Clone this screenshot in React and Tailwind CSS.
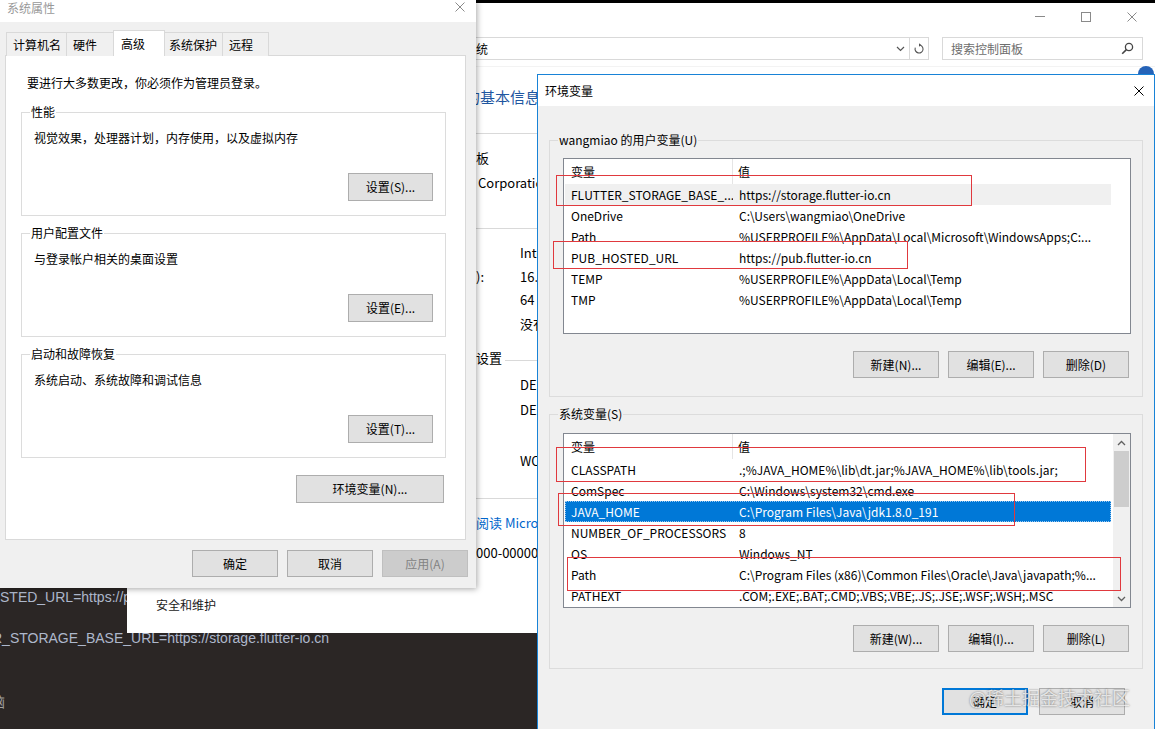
import React from 'react'

const ui = "font-['Noto_Sans_CJK_SC','Noto_Sans',sans-serif]"

const userVars = [
  ['FLUTTER_STORAGE_BASE_...', 'https://storage.flutter-io.cn', 'hover'],
  ['OneDrive', 'C:\\Users\\wangmiao\\OneDrive'],
  ['Path', '%USERPROFILE%\\AppData\\Local\\Microsoft\\WindowsApps;C:...'],
  ['PUB_HOSTED_URL', 'https://pub.flutter-io.cn'],
  ['TEMP', '%USERPROFILE%\\AppData\\Local\\Temp'],
  ['TMP', '%USERPROFILE%\\AppData\\Local\\Temp'],
]

const sysVars = [
  ['CLASSPATH', '.;%JAVA_HOME%\\lib\\dt.jar;%JAVA_HOME%\\lib\\tools.jar;'],
  ['ComSpec', 'C:\\Windows\\system32\\cmd.exe'],
  ['JAVA_HOME', 'C:\\Program Files\\Java\\jdk1.8.0_191', 'selected'],
  ['NUMBER_OF_PROCESSORS', '8'],
  ['OS', 'Windows_NT'],
  ['Path', 'C:\\Program Files (x86)\\Common Files\\Oracle\\Java\\javapath;%...'],
  ['PATHEXT', '.COM;.EXE;.BAT;.CMD;.VBS;.VBE;.JS;.JSE;.WSF;.WSH;.MSC'],
]

// annotation rectangles drawn over the screenshot
const marks = [
  'left-[556px] top-[175px] w-[416px] h-[31px]',
  'left-[553px] top-[241px] w-[355px] h-[28px]',
  'left-[556px] top-[447px] w-[530px] h-[35px]',
  'left-[558px] top-[493px] w-[457px] h-[33px]',
  'left-[567px] top-[557px] w-[554px] h-[34px]',
]

function XIcon({ className = '' }) {
  return (
    <svg width="10" height="10" viewBox="0 0 10 10" className={className}>
      <path d="M0.5 0.5L9.5 9.5M9.5 0.5L0.5 9.5" stroke="currentColor" strokeWidth="1" fill="none" />
    </svg>
  )
}

function Chevron({ up }) {
  return (
    <svg width="9" height="6" viewBox="0 0 9 6">
      <path d={up ? 'M1 5L4.5 1.5L8 5' : 'M1 1L4.5 4.5L8 1'} stroke="#606060" strokeWidth="1.3" fill="none" />
    </svg>
  )
}

function WinButton({ children, className = '', disabled = false, primary = false }) {
  const look = primary
    ? 'border-2 border-[#0078d7] bg-[#e1e1e1] text-black'
    : disabled
      ? 'border border-[#bfbfbf] bg-[#cccccc] text-[#838383]'
      : 'border border-[#adadad] bg-[#e1e1e1] text-black'
  return (
    <div className={`flex items-center justify-center text-[12px] leading-[16px] ${look} ${className}`}>
      {children}
    </div>
  )
}

function Group({ title, text, button, className = '' }) {
  return (
    <fieldset className={`w-[425px] border border-[#dcdcdc] ${className}`}>
      <legend className="ml-[8px] px-[1px] text-[12px] leading-[14px]">{title}</legend>
      <div className="px-[12px] pb-[14px]">
        <div className="pt-[11px] text-[12px] leading-[16px]">{text}</div>
        <div className="mt-[27px] flex justify-end">
          <WinButton className="w-[85px] h-[28px]">{button}</WinButton>
        </div>
      </div>
    </fieldset>
  )
}

function ListView({ rows, scroll = false, height }) {
  return (
    <div className={`flex w-[568px] border border-[#828790] bg-white overflow-hidden ${height}`}>
      <div className="flex-1 pl-px">
        <div className="flex h-[25px] w-[546px] items-center text-[12px] leading-[16px]">
          <div className="flex h-full w-[168px] items-center pl-[6px] border-r border-[#e5e5e5]">变量</div>
          <div className="pl-[5px]">值</div>
        </div>
        {rows.map(([name, value, state]) => (
          <div
            key={name + value}
            className={`flex h-[21px] w-[546px] items-center text-[12px] leading-[16px] whitespace-nowrap ${
              state === 'selected'
                ? 'bg-[#0078d7] text-white outline-1 outline-dotted outline-[#9cc8f0] -outline-offset-1'
                : state === 'hover'
                  ? 'bg-[#f0f0f0] text-black'
                  : 'text-black'
            }`}
          >
            <div className="w-[168px] overflow-hidden pl-[6px]">{name}</div>
            <div className="flex-1 overflow-hidden pl-[6px]">{value}</div>
          </div>
        ))}
      </div>
      {scroll && (
        <div className="flex w-[17px] flex-col bg-[#f0f0f0]">
          <div className="flex h-[17px] items-center justify-center"><Chevron up /></div>
          <div className="mx-px h-[56px] bg-[#cdcdcd]" />
          <div className="flex-1" />
          <div className="flex h-[17px] items-center justify-center"><Chevron /></div>
        </div>
      )}
    </div>
  )
}

function Terminal() {
  return (
    <div className="absolute left-0 right-0 top-[3px] bottom-0 bg-[#2b2625] font-['Liberation_Sans',Arial,'Noto_Sans_CJK_SC',sans-serif] text-[14px] leading-[20px] text-[#aeb8cc]">
      <div className="flex flex-col whitespace-nowrap pt-[584px]">
        <div>STED_URL=https://pub.flutter-io.cn</div>
        <div className="mt-[21px] -ml-[8px]">R_STORAGE_BASE_URL=https://storage.flutter-io.cn</div>
        <div className="mt-[44px] -ml-[23px] text-[#a0a0a0]">电脑</div>
      </div>
    </div>
  )
}

function ControlPanel() {
  return (
    <div className={`absolute left-[127px] top-[3px] right-0 h-[630px] bg-white flex flex-col ${ui}`}>
      <div className="flex h-[27px] justify-end text-[#8a8a8a]">
        <div className="flex w-[46px] items-center justify-center">
          <div className="h-px w-[10px] bg-[#8a8a8a]" />
        </div>
        <div className="flex w-[46px] items-center justify-center">
          <div className="h-[10px] w-[10px] border border-[#8a8a8a]" />
        </div>
        <div className="flex w-[46px] items-center justify-center">
          <XIcon />
        </div>
      </div>
      <div className="flex gap-[13px] pl-[113px] pr-[12px] pt-[7px] pb-[6px]">
        <div className="flex h-[23px] flex-1 border border-[#d9d9d9]">
          <div className="flex flex-1 items-center pl-[223px] text-[12px] leading-[16px] text-black">系统</div>
          <div className="flex w-[18px] items-center justify-center">
            <svg width="9" height="6" viewBox="0 0 9 6">
              <path d="M1 1L4.5 4.5L8 1" stroke="#555" strokeWidth="1.2" fill="none" />
            </svg>
          </div>
          <div className="flex w-[19px] items-center justify-center border-l border-[#d9d9d9]">
            <svg width="12" height="12" viewBox="0 0 12 12">
              <path d="M6 2A4 4 0 1 1 2.3 4.6" stroke="#555" strokeWidth="1.1" fill="none" />
              <path d="M6 0.2L6 3.8L8.2 2Z" fill="#555" />
            </svg>
          </div>
        </div>
        <div className="flex h-[23px] w-[201px] items-center justify-between border border-[#d9d9d9] pl-[8px] pr-[8px]">
          <span className="text-[12px] leading-[16px] text-[#6d6d6d]">搜索控制面板</span>
          <svg width="13" height="13" viewBox="0 0 13 13">
            <circle cx="8" cy="5" r="3.6" stroke="#444" strokeWidth="1.3" fill="none" />
            <path d="M5.4 7.6L1.2 11.8" stroke="#444" strokeWidth="1.6" />
          </svg>
        </div>
      </div>
      <div className="absolute left-[1011px] top-[63px] h-[16px] w-[16px] rounded-full bg-[#2563b8]" />
      <div className="flex flex-1 border-t border-[#f3f3f3]">
        <div className="flex w-[349px] flex-col justify-end pl-[29px] pb-[18px] text-[12px] leading-[20px] text-[#1a1a1a]">
          安全和维护
        </div>
        <div className="flex flex-1 flex-col whitespace-nowrap text-[13px] leading-[20px] text-black">
          <div className="-ml-[116px] pt-[19px] text-[15px] leading-[22px] text-[#1e56a0]">查看有关计算机的基本信息</div>
          <div className="mt-[25px] h-px bg-[#d9d9d9]" />
          <div className="mt-[14px] h-[20px]">板</div>
          <div className="mt-[5px] h-[20px] pl-[2px]">Corporation。保留所有权利。</div>
          <div className="mt-[35px] h-px bg-[#d9d9d9]" />
          <div className="mt-[14px] flex h-[20px]"><span className="w-[44px]" /><span>Intel(R) Core(TM)</span></div>
          <div className="mt-[4px] flex h-[20px]"><span className="w-[44px]">):</span><span>16.0 GB</span></div>
          <div className="mt-[3px] flex h-[20px]"><span className="w-[44px]" /><span>64 位操作系统</span></div>
          <div className="mt-[4px] flex h-[20px]"><span className="w-[44px]" /><span>没有可用于此显示器的笔</span></div>
          <div className="mt-[14px] flex h-[20px] items-center">
            <span>设置</span>
            <div className="ml-[3px] mt-[4px] h-px flex-1 bg-[#d9d9d9]" />
          </div>
          <div className="mt-[7px] flex h-[20px]"><span className="w-[44px]" /><span>DESKTOP</span></div>
          <div className="mt-[5px] flex h-[20px]"><span className="w-[44px]" /><span>DESKTOP</span></div>
          <div className="mt-[31px] flex h-[20px]"><span className="w-[44px]" /><span>WORKGROUP</span></div>
          <div className="mt-[27px] h-px bg-[#d9d9d9]" />
          <div className="mt-[14px] h-[20px] text-[#0066cc]">阅读 Microsoft 软件许可条款</div>
          <div className="mt-[10px] h-[20px]">000-00000-AA</div>
        </div>
      </div>
    </div>
  )
}

function SystemProperties() {
  const tabs = [
    ['计算机名', 'w-[61px] pl-[6px]'],
    ['硬件', 'w-[48px] pl-[6px]'],
    ['高级', 'w-[52px] pl-[7px]', true],
    ['系统保护', 'w-[59px] pl-[4px]'],
    ['远程', 'w-[47px] pl-[6px]'],
  ]
  return (
    <div className={`absolute left-0 top-0 flex h-[588px] w-[476px] flex-col bg-[#f0f0f0] shadow-[1px_1px_6px_rgba(0,0,0,0.35)] ${ui}`}>
      <div className="flex h-[22px] items-start justify-between bg-white pl-[7px] pr-[11px]">
        <span className="pt-px text-[12px] leading-[14px] text-[#999999]">系统属性</span>
        <XIcon className="mt-[2px] text-[#8a8a8a]" />
      </div>
      <div className="ml-[5px] mt-[8px] w-[461px]">
        <div className="flex h-[26px] items-end pl-px">
          {tabs.map(([label, size, active], i) => (
            <div
              key={label}
              className={`flex items-center border-t border-x border-[#d9d9d9] text-[12px] leading-[16px] ${size} ${
                i > 0 ? '-ml-px' : ''
              } ${active ? 'relative z-10 h-[26px] bg-white' : 'h-[24px] bg-[#f0f0f0]'}`}
            >
              {label}
            </div>
          ))}
        </div>
        <div className="-mt-px flex h-[485px] flex-col border border-[#d9d9d9] bg-white pl-[15px]">
          <div className="ml-[6px] pt-[19px] text-[12px] leading-[16px]">要进行大多数更改，你必须作为管理员登录。</div>
          <Group className="mt-[14px]" title="性能" text="视觉效果，处理器计划，内存使用，以及虚拟内存" button="设置(S)..." />
          <Group className="mt-[10px]" title="用户配置文件" text="与登录帐户相关的桌面设置" button="设置(E)..." />
          <Group className="mt-[10px]" title="启动和故障恢复" text="系统启动、系统故障和调试信息" button="设置(T)..." />
          <div className="mt-[17px] flex w-[425px] justify-end pr-[2px]">
            <WinButton className="h-[28px] w-[148px]">环境变量(N)...</WinButton>
          </div>
        </div>
      </div>
      <div className="mt-[10px] flex justify-end gap-[9px] pr-[8px]">
        <WinButton className="h-[27px] w-[86px]">确定</WinButton>
        <WinButton className="h-[27px] w-[86px]">取消</WinButton>
        <WinButton disabled className="h-[27px] w-[86px]">应用(A)</WinButton>
      </div>
    </div>
  )
}

function EnvDialog() {
  return (
    <div className={`absolute left-[537px] top-[74px] flex h-[680px] w-[618px] flex-col border border-[#1883d7] bg-[#f0f0f0] ${ui}`}>
      <div className="flex h-[31px] items-center justify-between bg-white pl-[7px] pr-[10px]">
        <span className="text-[12px] leading-[16px] text-black">环境变量</span>
        <XIcon className="text-black" />
      </div>
      <fieldset className="ml-[11px] mt-[27px] w-[594px] border border-[#dcdcdc]">
        <legend className="ml-[8px] px-[1px] text-[12px] leading-[14px]">wangmiao 的用户变量(U)</legend>
        <div className="pl-[13px] pt-[11px] pb-[18px]">
          <ListView rows={userVars} height="h-[176px]" />
          <div className="mt-[17px] flex w-[568px] justify-end gap-[9px] pr-[2px]">
            <WinButton className="h-[27px] w-[86px]">新建(N)...</WinButton>
            <WinButton className="h-[27px] w-[86px]">编辑(E)...</WinButton>
            <WinButton className="h-[27px] w-[86px]">删除(D)</WinButton>
          </div>
        </div>
      </fieldset>
      <fieldset className="ml-[11px] mt-[10px] w-[594px] border border-[#dcdcdc]">
        <legend className="ml-[8px] px-[1px] text-[12px] leading-[14px]">系统变量(S)</legend>
        <div className="pl-[13px] pt-[12px] pb-[16px]">
          <ListView rows={sysVars} scroll height="h-[175px]" />
          <div className="mt-[17px] flex w-[568px] justify-end gap-[9px] pr-[2px]">
            <WinButton className="h-[27px] w-[86px]">新建(W)...</WinButton>
            <WinButton className="h-[27px] w-[86px]">编辑(I)...</WinButton>
            <WinButton className="h-[27px] w-[86px]">删除(L)</WinButton>
          </div>
        </div>
      </fieldset>
      <div className="mt-[19px] flex justify-end gap-[11px] pr-[29px]">
        <WinButton primary className="h-[27px] w-[86px]">确定</WinButton>
        <WinButton className="h-[27px] w-[86px]">取消</WinButton>
      </div>
    </div>
  )
}

export default function App() {
  return (
    <div className="relative h-[729px] w-[1155px] overflow-hidden bg-black">
      <Terminal />
      <ControlPanel />
      <SystemProperties />
      <EnvDialog />
      {marks.map((m) => (
        <div key={m} className={`pointer-events-none absolute border border-[#e0393e] ${m}`} />
      ))}
      <div className={`pointer-events-none absolute left-[969px] top-[685px] text-[18px] leading-[24px] text-white/75 [text-shadow:0_0_2px_rgba(0,0,0,0.55)] ${ui}`}>
        @稀土掘金技术社区
      </div>
    </div>
  )
}
